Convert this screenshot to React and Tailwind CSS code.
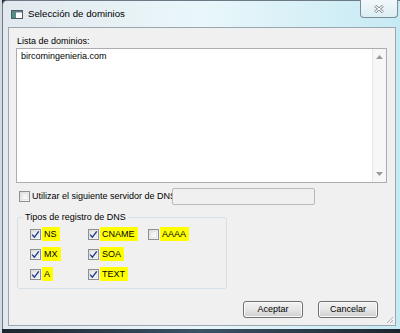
import React from 'react';

const font = { fontFamily: '"Liberation Sans", Arial, sans-serif' };

// Small Win7-style checkbox
const Check = ({ checked }) => (
  <span className="relative flex h-[11px] w-[11px] shrink-0 items-center justify-center border border-[#8e8f8f] bg-gradient-to-br from-[#dcdcdc] to-[#fbfbfb]">
    <span className="absolute inset-[1px] border border-[#e4e4e4] bg-gradient-to-br from-[#e9e9e9] to-[#ffffff]" />
    {checked ? (
      <svg className="relative h-[9px] w-[9px]" viewBox="0 0 9 9">
        <path d="M1.2 4.6 L3.4 7.2 L7.8 1.4" fill="none" stroke="#21398a" strokeWidth="1.4" />
      </svg>
    ) : (
      <span className="relative h-[9px] w-[9px]" />
    )}
  </span>
);

// record label, marked with a yellow highlighter
const Record = ({ checked = true, label }) => (
  <div className="flex h-[20px] items-center">
    <Check checked={checked} />
    <span className="ml-[1px] inline-block h-[14px] bg-[#ffff00] pl-[2px] pr-[3px] leading-[14px] shadow-[inset_0_0_0_8px_#ffff00]">{label}</span>
  </div>
);

const Btn = ({ children }) => (
  <button className="flex h-[17px] w-[60px] items-center justify-center rounded-[3px] border border-[#707070] bg-gradient-to-b from-[#f2f2f2] via-[#e6e6e6] to-[#cfcfcf] text-[9px] text-black shadow-[inset_0_0_0_1px_#fbfbfb]">
    {children}
  </button>
);

export default function App() {
  return (
    <div className="flex h-[333px] w-[400px] items-start overflow-hidden bg-gradient-to-r from-[#1d262e] via-[#3a5468] to-[#1d262e]" style={font}>
      {/* desktop strip at the left */}
      <div className="h-[333px] w-[2px] bg-[#d3dbe2]" />

      {/* window */}
      <div className="relative flex h-[329px] w-[398px] flex-col rounded-tl-[5px] border-l border-t border-[#6d7a86] bg-gradient-to-r from-[#e2e9ee] via-[#eaf7fa] to-[#c6eaf4] pb-[3px] pl-[5px]">
        {/* title bar */}
        <div className="flex h-[26px] items-center">
          <svg className="ml-[3px] h-[9px] w-[12px]" viewBox="0 0 12 9">
            <rect x="0.5" y="0.5" width="11" height="8" fill="#ffffff" stroke="#4b5a63" />
            <rect x="1" y="1" width="4" height="7" fill="#4f8f7c" />
            <rect x="1" y="1" width="10" height="1.5" fill="#6a7d8a" />
          </svg>
          <span className="ml-[5px] text-[9.7px] text-black">Selección de dominios</span>
        </div>
        <div className="absolute right-[2px] top-[-1px] flex h-[18px] w-[38px] items-center justify-center rounded-b-[4px] border border-t-0 border-[#7f8c97] bg-gradient-to-b from-[#f2f8fa] to-[#dbeef4]">
          <svg className="h-[8px] w-[10px]" viewBox="0 0 10 8">
            <path d="M1 0.8 L9 7.2 M9 0.8 L1 7.2" stroke="#6a6f74" strokeWidth="2.6" />
            <path d="M1 0.8 L9 7.2 M9 0.8 L1 7.2" stroke="#ffffff" strokeWidth="1.2" />
          </svg>
        </div>

        {/* client area */}
        <div className="relative flex w-[388px] flex-1 flex-col border border-[#9aa7b3] bg-[#f0f0f0] px-[7px] text-[9px] leading-[11px] text-black">
          <div className="mt-[8px] pl-[1px]">Lista de dominios:</div>

          <div className="mt-[1px] flex h-[135px] w-[371px] border border-[#abadb3] bg-white">
            <div className="flex-1 pl-[4px] pt-[2px]">bircomingenieria.com</div>
            <div className="flex w-[14px] flex-col items-center justify-between border-l border-[#e6e6e6] bg-[#f7f7f7] py-[6px]">
              <svg className="h-[4px] w-[7px]" viewBox="0 0 7 4"><path d="M0 4 L3.5 0 L7 4Z" fill="#9a9a9a" /></svg>
              <svg className="h-[4px] w-[7px]" viewBox="0 0 7 4"><path d="M0 0 L3.5 4 L7 0Z" fill="#9a9a9a" /></svg>
            </div>
          </div>

          {/* DNS server row */}
          <div className="mt-[5px] flex h-[17px] items-center">
            <div className="flex w-[156px] items-center">
              <span className="ml-[3px]"><Check checked={false} /></span>
              <span className="ml-[2px] whitespace-nowrap">Utilizar el siguiente servidor de DNS</span>
            </div>
            <div className="h-[17px] w-[143px] rounded-[2px] border border-[#b5b8bd] bg-[#f0f0f0]" />
          </div>

          {/* record types group */}
          <div className="relative ml-[1px] mt-[12px] h-[72px] w-[210px] rounded-[3px] border border-[#d5dfe5] pl-[12px] pt-[6px]">
            <span className="absolute left-[5px] top-[-6px] bg-[#f0f0f0] px-[2px]">Tipos de registro de DNS</span>
            <div className="grid grid-cols-[58px_60px_60px]">
              <Record label="NS" />
              <Record label="CNAME" />
              <Record checked={false} label="AAAA" />
              <Record label="MX" />
              <Record label="SOA" />
              <div />
              <Record label="A" />
              <Record label="TEXT" />
            </div>
          </div>

          {/* buttons */}
          <div className="mt-[12px] flex justify-end gap-[15px] pr-[10px]">
            <Btn>Aceptar</Btn>
            <Btn>Cancelar</Btn>
          </div>

          {/* resize grip */}
          <svg className="absolute bottom-[1px] right-[1px] h-[8px] w-[8px]" viewBox="0 0 8 8">
            <path d="M7 1 L1 7 M7 4 L4 7 M7 6.5 L6.5 7" stroke="#a9b1b8" strokeWidth="1" />
          </svg>
        </div>
      </div>
    </div>
  );
}
